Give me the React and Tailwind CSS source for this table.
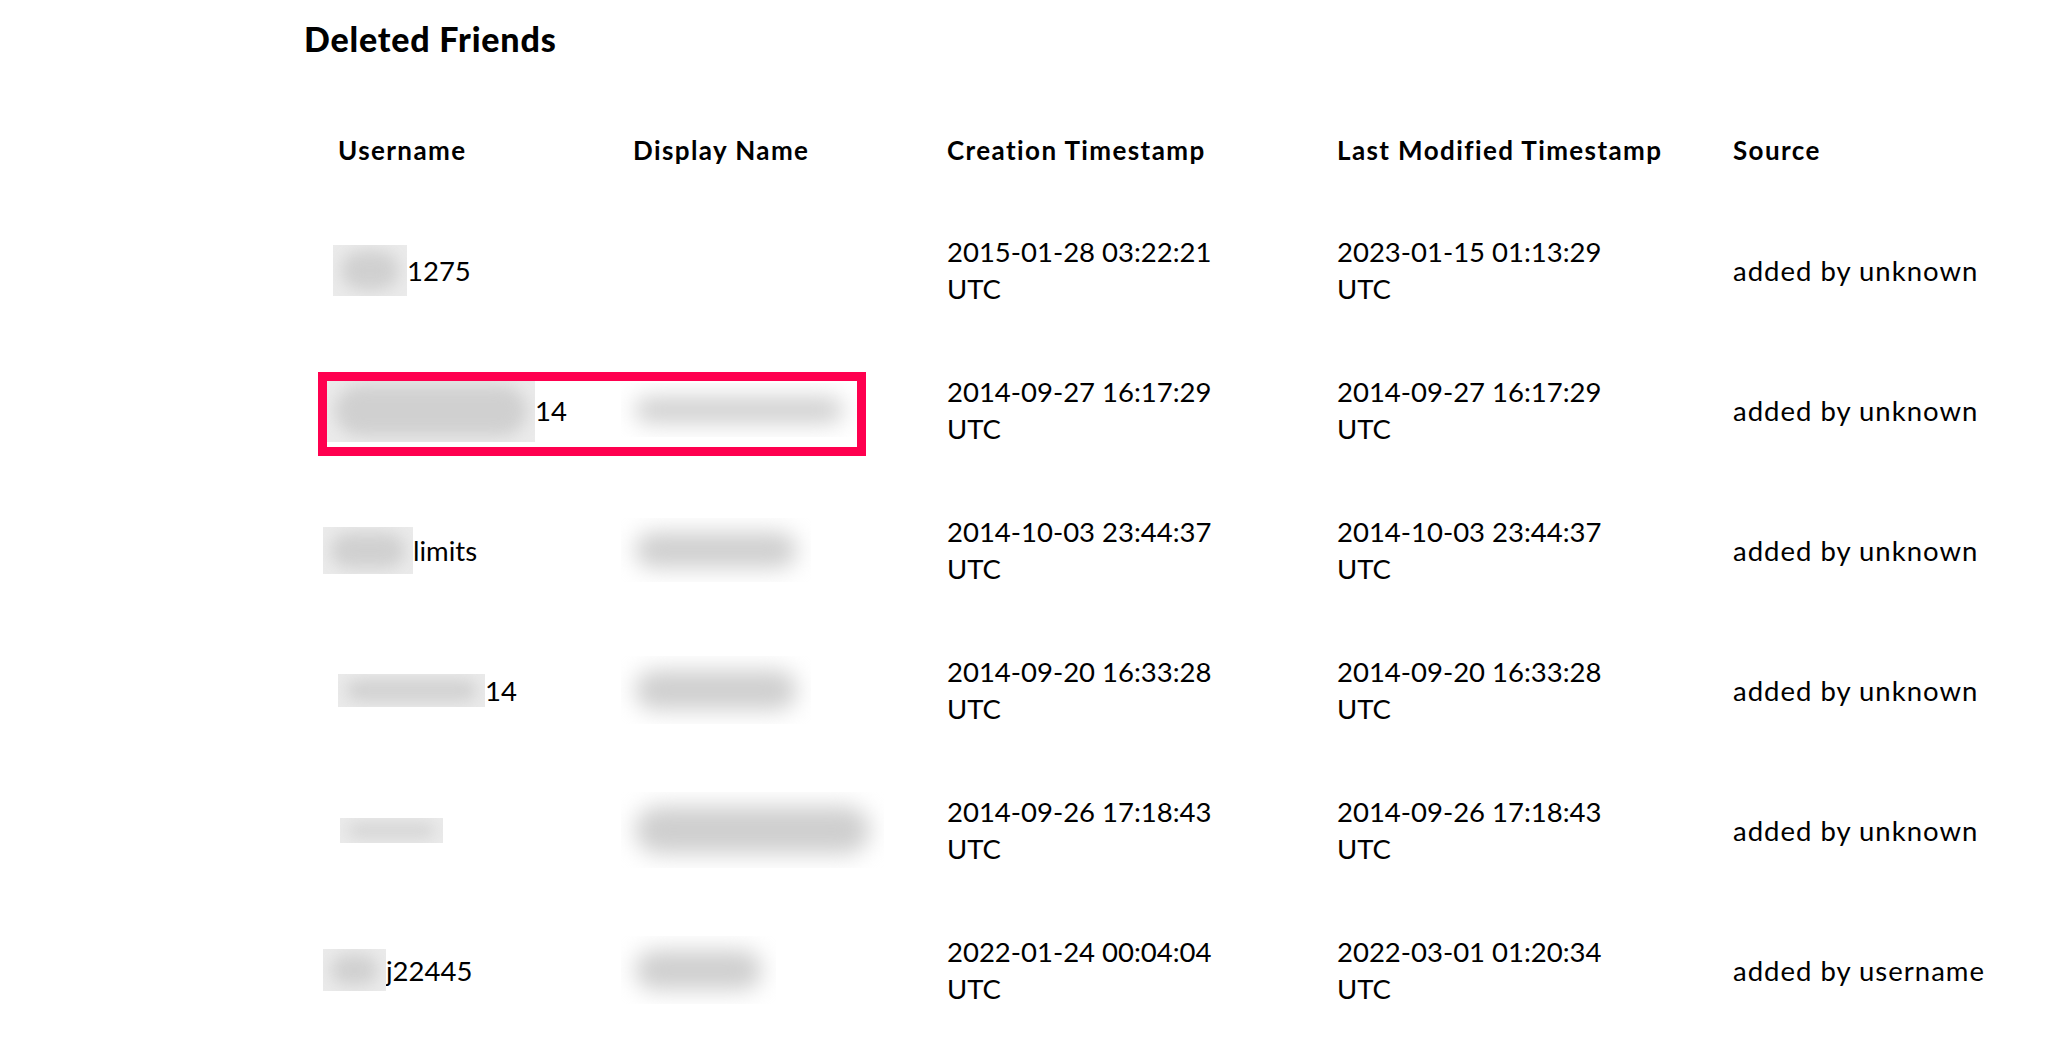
import React from "react";

const rows = [
  {
    u: { w: 74, h: 51, ml: -5, text: "1275" },
    d: null,
    c: "2015-01-28 03:22:21",
    m: "2023-01-15 01:13:29",
    s: "added by unknown",
  },
  {
    u: { w: 208, h: 63, ml: -11, text: "14" },
    d: { w: 236, h: 54 },
    c: "2014-09-27 16:17:29",
    m: "2014-09-27 16:17:29",
    s: "added by unknown",
    box: true,
  },
  {
    u: { w: 90, h: 47, ml: -15, text: "limits" },
    d: { w: 190, h: 64 },
    c: "2014-10-03 23:44:37",
    m: "2014-10-03 23:44:37",
    s: "added by unknown",
  },
  {
    u: { w: 147, h: 33, ml: 0, text: "14" },
    d: { w: 190, h: 68 },
    c: "2014-09-20 16:33:28",
    m: "2014-09-20 16:33:28",
    s: "added by unknown",
  },
  {
    u: { w: 103, h: 25, ml: 2, text: "" },
    d: { w: 263, h: 76 },
    c: "2014-09-26 17:18:43",
    m: "2014-09-26 17:18:43",
    s: "added by unknown",
  },
  {
    u: { w: 63, h: 42, ml: -15, text: "j22445" },
    d: { w: 155, h: 68 },
    c: "2022-01-24 00:04:04",
    m: "2022-03-01 01:20:34",
    s: "added by username",
  },
];

function HardBlur({ w, h }) {
  return (
    <span
      className="relative inline-block shrink-0 overflow-hidden bg-[#ebebeb]"
      style={{ width: w, height: h }}
    >
      <span className="absolute inset-x-[8px] inset-y-[6px] rounded-full bg-[#d0d0d0] blur-[8px]" />
    </span>
  );
}

function SoftBlur({ w, h }) {
  return (
    <span
      className="relative inline-block shrink-0 overflow-hidden bg-white"
      style={{ width: w, height: h }}
    >
      <span className="absolute inset-x-[14px] inset-y-[14px] rounded-full bg-[#cfcfcf] blur-[11px]" />
    </span>
  );
}

export default function App() {
  return (
    <div
      className="h-[1058px] w-full overflow-hidden bg-white text-black"
      style={{ fontFamily: "Lato, 'Open Sans', sans-serif" }}
    >
      <div className="h-[100px] pl-[304px] pt-[19px]">
        <h1 className="text-[34px] font-black leading-[40px] tracking-[0.8px]">Deleted Friends</h1>
      </div>
      <div className="pl-[338px]">
        <div className="grid h-[100px] grid-cols-[295px_314px_390px_396px_1fr] items-center text-[26px] font-bold leading-[32px] tracking-[1.4px]">
          <div>Username</div>
          <div>Display Name</div>
          <div>Creation Timestamp</div>
          <div>Last Modified Timestamp</div>
          <div>Source</div>
        </div>
        {rows.map((r, i) => (
          <div
            key={i}
            className="relative grid h-[140px] grid-cols-[295px_314px_390px_396px_1fr] items-center text-[27.5px] leading-[37px]"
          >
            <div className="flex items-center" style={{ marginLeft: r.u.ml }}>
              <HardBlur w={r.u.w} h={r.u.h} />
              <span>{r.u.text}</span>
            </div>
            <div className="ml-[-12px] flex items-center">
              {r.d && <SoftBlur w={r.d.w} h={r.d.h} />}
            </div>
            <div>
              {r.c}
              <br />
              UTC
            </div>
            <div>
              {r.m}
              <br />
              UTC
            </div>
            <div className="tracking-[1px]">{r.s}</div>
            {r.box && (
              <div className="pointer-events-none absolute left-[-20px] top-[32px] h-[84px] w-[548px] border-[9px] border-[#ff004f]" />
            )}
          </div>
        ))}
      </div>
    </div>
  );
}
